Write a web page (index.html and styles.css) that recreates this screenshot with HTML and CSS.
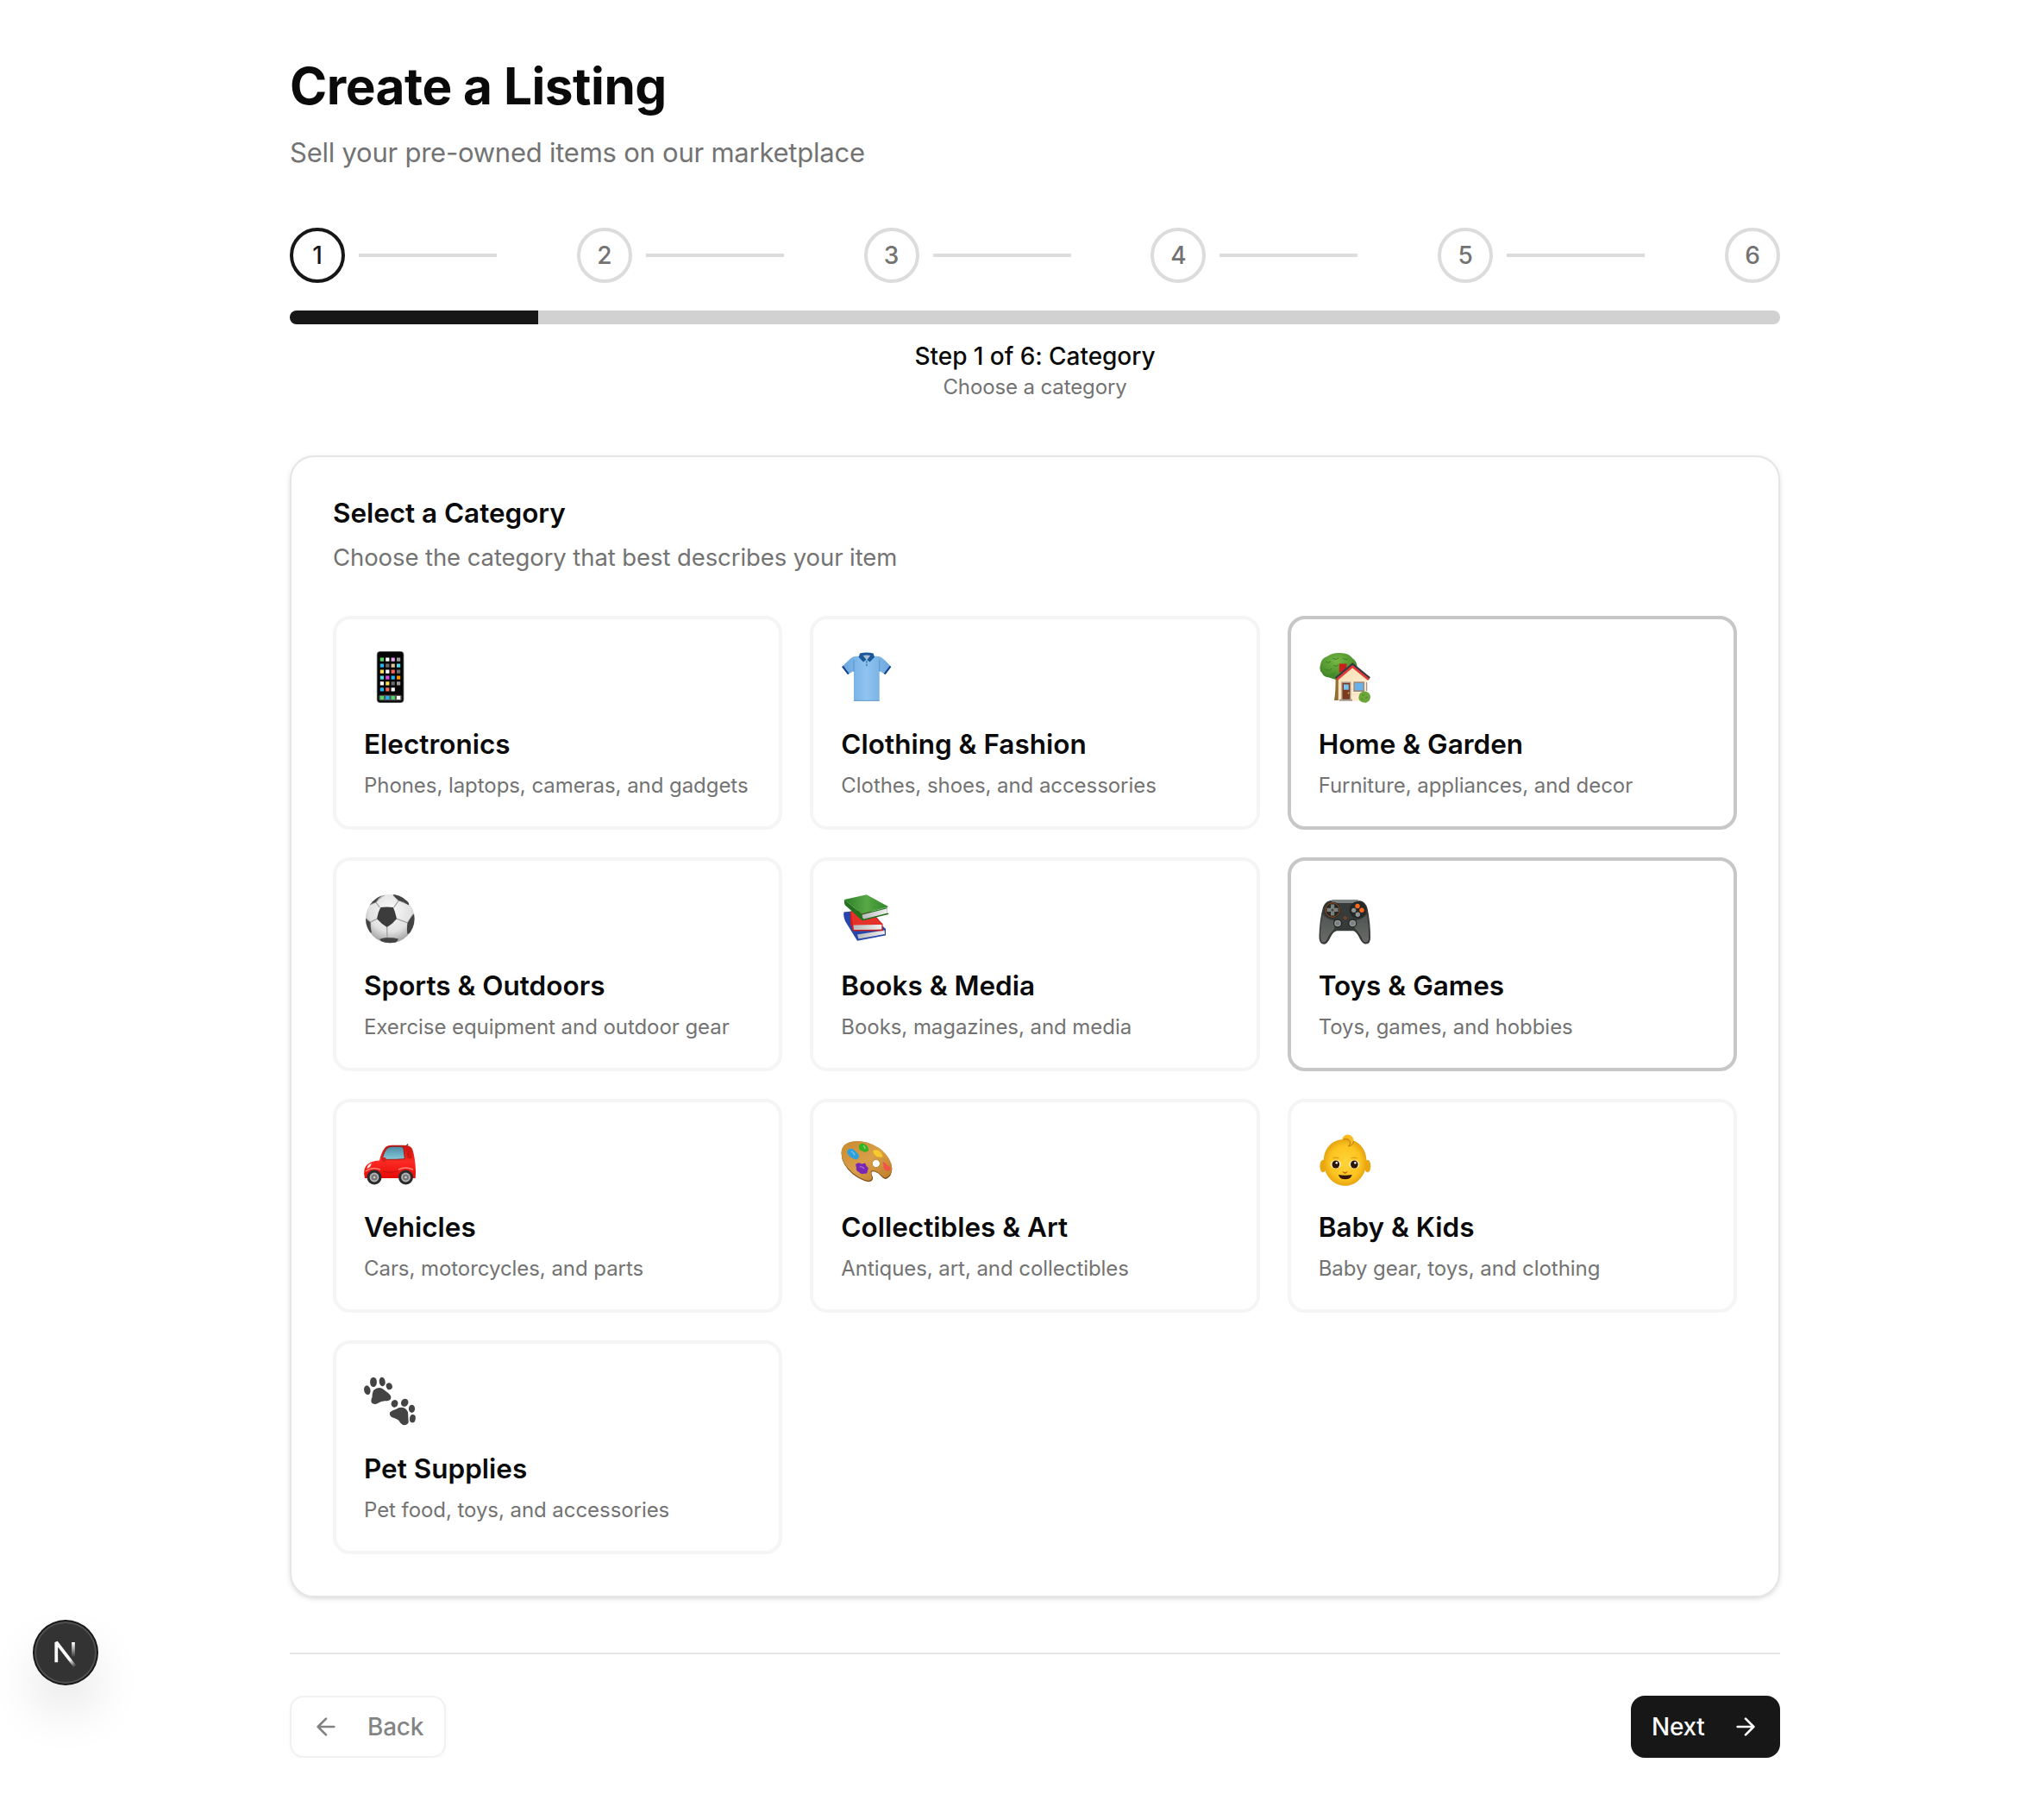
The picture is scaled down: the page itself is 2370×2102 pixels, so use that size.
FILE: index.html
```html
<!DOCTYPE html>
<html lang="en">
<head>
<meta charset="utf-8">
<title>Create a Listing</title>
<link rel="stylesheet" href="styles.css">
</head>
<body>
<main class="page">
  <header class="header">
    <h1 class="title">Create a Listing</h1>
    <p class="subtitle">Sell your pre-owned items on our marketplace</p>
  </header>

  <section class="progress">
    <ol class="steps">
      <li class="step step-active"><span class="dot">1</span><span class="line"></span></li>
      <li class="step"><span class="dot">2</span><span class="line"></span></li>
      <li class="step"><span class="dot">3</span><span class="line"></span></li>
      <li class="step"><span class="dot">4</span><span class="line"></span></li>
      <li class="step"><span class="dot">5</span><span class="line"></span></li>
      <li class="step"><span class="dot">6</span></li>
    </ol>
    <div class="track"><div class="fill"></div></div>
    <div class="caption">
      <p class="caption-title">Step 1 of 6: Category</p>
      <p class="caption-text">Choose a category</p>
    </div>
  </section>

  <section class="card">
    <h2 class="card-title">Select a Category</h2>
    <p class="card-text">Choose the category that best describes your item</p>
    <div class="grid">
      <button class="tile">
        <svg class="emoji" viewBox="0 0 60 60">
          <rect x="14.8" y="0" width="31.6" height="60" rx="4" fill="#777"/>
          <rect x="15.6" y=".8" width="30" height="58.4" rx="3.4" fill="#050505"/>
          <rect x="17.3" y="50.7" width="26.4" height="6.6" rx="1.6" fill="#555"/>
          <g>
            <path fill="#4cd964" d="M18.8 7.6h4.2v4.2h-4.2zM18.8 51.9h4.2v4.2h-4.2zM31.6 51.9h4.2v4.2h-4.2z"/>
            <path fill="#fff" d="M25.2 7.6h4.2v4.2h-4.2zM25.2 21.6h4.2v4.2h-4.2zM18.8 35.3h4.2v4.2h-4.2zM31.6 42.2h4.2v4.2h-4.2zM38 51.9h4.2v4.2h-4.2z"/>
            <path fill="#e9a6f5" d="M31.6 7.6h4.2v4.2h-4.2z"/>
            <path fill="#999" d="M38 7.6h4.2v4.2H38zM38 35.3h4.2v4.2H38z"/>
            <path fill="#1fb4f7" d="M18.8 14.6h4.2v4.2h-4.2zM31.6 28.5h4.2v4.2h-4.2zM18.8 42.2h4.2v4.2h-4.2zM25.2 51.9h4.2v4.2h-4.2z"/>
            <path fill="#6b6b6b" d="M25.2 14.6h4.2v4.2h-4.2zM38 21.6h4.2v4.2H38zM31.6 35.3h4.2v4.2h-4.2z"/>
            <path fill="#e2c39b" d="M31.6 14.6h4.2v4.2h-4.2z"/>
            <path fill="#53d8ee" d="M38 14.6h4.2v4.2H38zM18.8 28.5h4.2v4.2h-4.2z"/>
            <path fill="#fbe04a" d="M18.8 21.6h4.2v4.2h-4.2zM25.2 35.3h4.2v4.2h-4.2z"/>
            <path fill="#f9655b" d="M31.6 21.6h4.2v4.2h-4.2zM25.2 42.2h4.2v4.2h-4.2z"/>
            <path fill="#e44be3" d="M25.2 28.5h4.2v4.2h-4.2z"/>
            <path fill="#ff9500" d="M38 28.5h4.2v4.2H38z"/>
          </g>
        </svg>
        <span class="tile-title">Electronics</span>
        <span class="tile-text">Phones, laptops, cameras, and gadgets</span>
      </button>

      <button class="tile">
        <svg class="emoji" viewBox="0 0 60 60">
          <defs>
            <linearGradient id="shirt" x1="0" x2="1"><stop offset="0" stop-color="#68a4dc"/><stop offset=".5" stop-color="#8fc4f0"/><stop offset="1" stop-color="#6ba6dc"/></linearGradient>
          </defs>
          <path d="M21 5.500L14 6.500Q10 9 1.200 18.200L8 27L15 23V57.300H44.700V23L51.500 27L58.200 18.200Q50 8.500 45 6.300L38.500 5.500Z" fill="url(#shirt)"/>
          <path d="M15 10V24M44.700 10V24" stroke="#4f8cc9" stroke-width=".8"/>
          <path d="M15 57.400H44.700" stroke="#4a87c4" stroke-width=".8"/>
          <path d="M1.200 18.200L8 27l1.600-1L2.600 16.800zM58.200 18.200L51.500 27l-1.700-1 7-9.200z" fill="#123f8c"/>
          <path d="M22 2.500Q30 .3 37.600 2.500L39 7L33.500 12.500L29.800 9.500L26 12.500L20.700 7Z" fill="#1c5799"/>
          <path d="M25.600 5Q30 3.800 34.200 5L30 10.600Z" fill="#a7bfd6"/>
          <path d="M29 10h1.800v7.500H29z" fill="#6fa9de"/>
          <circle cx="29.900" cy="12.500" r=".8" fill="#2f5e94"/><circle cx="29.900" cy="16" r=".8" fill="#2f5e94"/>
        </svg>
        <span class="tile-title">Clothing &amp; Fashion</span>
        <span class="tile-text">Clothes, shoes, and accessories</span>
      </button>

      <button class="tile tile-strong">
        <svg class="emoji" viewBox="0 0 60 60">
          <defs>
            <radialGradient id="leaf" cx=".45" cy=".3" r=".7"><stop offset="0" stop-color="#76b944"/><stop offset="1" stop-color="#3c8023"/></radialGradient>
            <linearGradient id="wall" x1="0" y1="0" x2="1" y2="1"><stop offset="0" stop-color="#f6dfb4"/><stop offset="1" stop-color="#fff0d4"/></linearGradient>
          </defs>
          <path d="M19.5 28H24V57H18Q20 45 19.5 28Z" fill="#937032"/>
          <path d="M10 6Q16 1.5 25 2Q35 2 39 8Q45 12 44.5 19L38 28L20 33Q16 31.500 12 30.500Q6 30 4 25.500Q0 22 2 16Q3 8 10 6Z" fill="url(#leaf)"/>
          <path d="M8 12q3 3 6 0M16 8q4 3 7 0M8 21q4 3 7-1M17 16q3 3 6 0M28 8q3 3 6 1M14 27q3 1 5-2" fill="none" stroke="#3c8023" stroke-width="1"/>
          <path d="M23.800 14.500h8.600v10h-8.600z" fill="#c8201f"/>
          <path d="M22.800 30L39.200 17L56.300 30V57.700H22.800Z" fill="url(#wall)"/>
          <path d="M24 38h31M24 44h31M24 50h31" stroke="#ead3a8" stroke-width=".5"/>
          <path d="M20 31.500L39.200 15.200L59 31.500" fill="none" stroke="#333a47" stroke-width="3"/>
          <path d="M21 33L39.200 17.700L58 33" fill="none" stroke="#e43a35" stroke-width="2.600"/>
          <path d="M26.300 35.500h11.100v21H26.300z" fill="#a5948a"/>
          <path d="M27.600 37h8.500v19.300h-8.500z" fill="#7c3a20"/>
          <path d="M29 38.500h5.800v6.200H29z" fill="#7cc0ee"/>
          <circle cx="34.500" cy="48.500" r=".9" fill="#e6b43c"/>
          <path d="M24 55.700h15v2H24z" fill="#a09a90"/>
          <path d="M40.300 35.300h12.800V47H40.300z" fill="#9b8b80"/><path d="M41.800 37h9.800v8.300h-9.800z" fill="#68b0e8"/>
          <path d="M55.700 36v10" stroke="#8c8077" stroke-width="1"/>
          <path d="M47 51Q48 47 53 46.500Q59 47 60 52.500Q60 58 55 59.700Q50 60 47 56.500Q45.500 54 47 51Z" fill="#6ca73a"/>
          <path d="M50 50.500q2 1.500 3 0M54 54q2 1 3-1M49 55q2 1 3 0" fill="none" stroke="#4a8427" stroke-width=".8"/>
        </svg>
        <span class="tile-title">Home &amp; Garden</span>
        <span class="tile-text">Furniture, appliances, and decor</span>
      </button>

      <button class="tile">
        <svg class="emoji" viewBox="0 0 60 60">
          <defs>
            <radialGradient id="ball" cx=".5" cy=".35" r=".65"><stop offset="0" stop-color="#fafafa"/><stop offset=".65" stop-color="#e2e2e2"/><stop offset="1" stop-color="#a0a0a0"/></radialGradient>
            <clipPath id="ballclip"><circle cx="30.300" cy="30" r="28.300"/></clipPath>
          </defs>
          <circle cx="30.300" cy="30" r="28.300" fill="url(#ball)"/>
          <g clip-path="url(#ballclip)">
            <path d="M18.300 17L13.700 11M34.700 17L40.300 9M38 30.300L50.700 35M26.700 40L27 52.300M15 30.300L7.300 34.300M13.700 11Q20 4 24 3M40.300 9L34 3M40.300 9L51 13.300M50.700 35L57 25M50.700 35L50.300 46M27 52.300L18.700 54M27 52.300L39.700 53.700M7.300 34.300L2.300 30M7.300 34.300L8 46M13.700 11L6.300 14.300" fill="none" stroke="#9a9a9a" stroke-width="1.200"/>
            <path d="M19.300 17Q26.500 16 34 17Q36.500 23 38 30.300Q33 36.500 26.700 40Q20 36 15 30.300Q16 23 19.300 17Z" fill="#3c3c3c"/>
            <path d="M4 15.500Q9 12 13.700 11Q16 7 21 3L12 0L0 10ZM33.500 2Q37 6.500 40.300 9Q46 10 52 14.500L52 4L36 -1ZM58.500 24Q53.500 29 50.700 35Q49.500 41 50.300 48L60 44ZM18 54Q23 52 27 52.300Q34 52 40 53.700L36 60H24ZM1 29Q4 32 7.300 34.300Q7.300 40 9 47L2 42Z" fill="#444"/>
          </g>
        </svg>
        <span class="tile-title">Sports &amp; Outdoors</span>
        <span class="tile-text">Exercise equipment and outdoor gear</span>
      </button>

      <button class="tile">
        <svg class="emoji" viewBox="0 0 60 60">
          <defs>
            <linearGradient id="green" x1="0" x2="1"><stop offset="0" stop-color="#2c7f27"/><stop offset=".5" stop-color="#57a845"/><stop offset="1" stop-color="#2f8629"/></linearGradient>
            <linearGradient id="pages" x1="0" x2="1"><stop offset="0" stop-color="#b9b9bb"/><stop offset="1" stop-color="#f0f0f0"/></linearGradient>
          </defs>
          <path d="M3.500 22.500L28 20L52 42L52 49.500L19 55.700L5 33Q2.500 27 3.500 22.500Z" fill="#2546ad"/>
          <path d="M19 48.500L50.500 43.500L51 48L20.500 53.500Z" fill="url(#pages)"/>
          <path d="M10.700 21.500L34 20L48.500 36.500V43.500L49.500 44.300L14 44.500L11 36Z" fill="#cc1f1c"/>
          <path d="M11.500 22L34 24L49 36.500L14 37.200Z" fill="#e6302a"/>
          <path d="M14.300 37.500L47.300 37V42.600L15 43Z" fill="url(#pages)"/>
          <path d="M4 8L29.700 2.300L55.300 16.300L24 24.500Z" fill="url(#green)"/>
          <path d="M4 8Q3.500 12 5 14.500L25 32.500L55.300 25V24L53.500 23.600V17L24 24.500Z" fill="#23701f"/>
          <path d="M25 25.500L53.500 18.300V23.800L26.300 30.500Q24 28 25 25.500Z" fill="url(#pages)"/>
        </svg>
        <span class="tile-title">Books &amp; Media</span>
        <span class="tile-text">Books, magazines, and media</span>
      </button>

      <button class="tile tile-strong">
        <svg class="emoji" viewBox="0 0 60 60">
          <defs>
            <linearGradient id="pad" x1="0" y1="0" x2="0" y2="1"><stop offset="0" stop-color="#4e5453"/><stop offset="1" stop-color="#6a6b66"/></linearGradient>
          </defs>
          <path d="M12 9.500L16 8.500L45 8.500L49 9.500Q54.500 11 56.500 18Q60 34 60 52Q60 60 54 59.500Q50 59 46 50Q43 45 40 44.300H21Q17 45 14 51Q10 60 6 59.700Q0 59.500 .5 50Q1 31 5 17Q7 11 12 9.500Z" fill="#363a39"/>
          <path d="M4.500 25Q10 31 17 32Q19 39 18 42Q12 48 8.500 56Q4 60 2.300 54Q1.500 40 4.500 25ZM56 25Q50 31 43.500 32Q41 39 42.500 42Q48.500 48 51.500 56Q56 60 58 54Q58.500 40 56 25Z" fill="url(#pad)"/>
          <path d="M14 9.500L17 8.200L44 8.200L48 9.500L44 12H17Z" fill="#7c8583"/>
          <circle cx="16" cy="20" r="9.500" fill="#242827"/><circle cx="45.500" cy="20" r="10" fill="#242827"/>
          <circle cx="16" cy="20" r="8.300" fill="none" stroke="#9b4e20" stroke-width="1"/>
          <path d="M14 13.500h4.200v4.300h4.300V22h-4.300v4.500H14V22H9.500v-4.200H14z" fill="#7b7f7d"/><circle cx="16" cy="20" r="1.500" fill="#444"/>
          <circle cx="45" cy="15.500" r="2.700" fill="#ff681d"/><circle cx="50" cy="20.300" r="2.700" fill="#ff681d"/>
          <circle cx="40.700" cy="20.300" r="2.600" fill="#929695"/><circle cx="45.300" cy="25.300" r="2.700" fill="#929695"/>
          <circle cx="22" cy="35.500" r="5" fill="#1f2221"/><circle cx="39.300" cy="35.500" r="5" fill="#1f2221"/>
          <circle cx="22" cy="35.500" r="3.800" fill="#969a9a"/><circle cx="39.300" cy="35.500" r="3.800" fill="#969a9a"/>
          <circle cx="22" cy="35.500" r="2.400" fill="#7a7e7e"/><circle cx="39.300" cy="35.500" r="2.400" fill="#7a7e7e"/>
          <circle cx="30.700" cy="29.300" r="1.300" fill="#4a2a1a" stroke="#c65a22" stroke-width=".8"/>
        </svg>
        <span class="tile-title">Toys &amp; Games</span>
        <span class="tile-text">Toys, games, and hobbies</span>
      </button>

      <button class="tile">
        <svg class="emoji" viewBox="0 0 60 60">
          <defs>
            <linearGradient id="car" x1="0" y1="0" x2="0" y2="1"><stop offset="0" stop-color="#c91410"/><stop offset=".5" stop-color="#fb2a22"/><stop offset="1" stop-color="#e50a05"/></linearGradient>
            <linearGradient id="glass" x1="0" y1="0" x2="0" y2="1"><stop offset="0" stop-color="#4c8ba0"/><stop offset="1" stop-color="#86c7da"/></linearGradient>
          </defs>
          <path d="M48.500 14L51.300 11.500" stroke="#444" stroke-width="1.200"/>
          <path d="M18 30.500Q20 21 24.500 15.500Q27 12.700 32 12.700H46Q54 12.700 56 17Q58.500 24 59.500 35Q60.500 43 59.700 51H1Q-.5 46 .5 41Q2 35 8 32.500Q13 30.500 18 30.500Z" fill="url(#car)"/>
          <path d="M21.300 29.300Q23 20 27 16.200Q29 14.300 33 14.300H43Q45.500 14.500 46 17L47.300 28.500Q40 29.500 21.300 29.300Z" fill="url(#glass)" stroke="#8d1613" stroke-width=".8"/>
          <path d="M49 16Q52.500 15.500 53.500 18L55.500 28H50.500Z" fill="#cf1713"/>
          <path d="M21.500 27h3.500q1.500 3-.5 5h-3z" fill="#d8201b"/>
          <path d="M2 43Q10 37 19 41M40 41Q48 37 57 41" fill="none" stroke="#ff8076" stroke-width="1.500"/>
          <path d="M3.500 40Q4 34.500 9 34L7 38Z" fill="#f7e9e7"/>
          <path d="M22 43Q30 46 39 43" fill="none" stroke="#c3120e" stroke-width="1"/>
          <circle cx="12" cy="50" r="8.500" fill="#2c2c2e"/><circle cx="48.500" cy="50" r="8.500" fill="#2c2c2e"/>
          <circle cx="12" cy="50" r="5.400" fill="#b5b5b7"/><circle cx="48.500" cy="50" r="5.400" fill="#b5b5b7"/>
          <circle cx="12" cy="50" r="3.600" fill="#77777a"/><circle cx="48.500" cy="50" r="3.600" fill="#77777a"/>
          <circle cx="12" cy="50" r="1.300" fill="#d0d0d0"/><circle cx="48.500" cy="50" r="1.300" fill="#d0d0d0"/>
        </svg>
        <span class="tile-title">Vehicles</span>
        <span class="tile-text">Cars, motorcycles, and parts</span>
      </button>

      <button class="tile">
        <svg class="emoji" viewBox="0 0 60 60">
          <defs>
            <linearGradient id="wood" x1="0" y1="0" x2="1" y2="1"><stop offset="0" stop-color="#c98a30"/><stop offset=".5" stop-color="#d99f49"/><stop offset="1" stop-color="#bd7a27"/></linearGradient>
          </defs>
          <path fill-rule="evenodd" d="M.6 22Q1 9.500 17.500 8.300Q33 8 47 18.500Q58.500 29 59.300 40.500Q59 49 52.500 52Q49.500 52 46 48Q40 42 36 43.500Q34.500 45 37 50Q37.500 55 32 55.300Q24 54 14 46.500Q.5 35 .6 22ZM36.500 34a4.300 4.300 0 1 0 8.600 0a4.300 4.300 0 1 0-8.600 0Z" fill="#7d4a16"/>
          <path fill-rule="evenodd" d="M.6 21Q1 9 17.500 8Q33 7.500 47 18Q58.500 28 59.300 39Q59 47 52.500 50.500Q49.500 50.500 46 47Q40 41 35.500 42.500Q33.500 44 36 49Q36.500 53.500 32 54Q24 53 14 45Q.5 34 .6 21ZM36.500 34a4.300 4.300 0 1 0 8.600 0a4.300 4.300 0 1 0-8.600 0Z" fill="url(#wood)"/>
          <path d="M9 17Q14 15.500 18 21Q22 24 20.500 28Q17 30.500 13 27.500Q8 25 7 20.500Z" fill="#2da0de"/>
          <path d="M21 13Q24 8.500 28.500 12Q32.500 15 32 19Q28 22 24.500 19.500Q20 18 21 13Z" fill="#35b321"/>
          <path d="M38 18.500Q43 17.500 46 21Q50 26 47.500 26.500Q42 27.500 40 24.500Q36 21 38 18.500Z" fill="#f8cb2d"/>
          <path d="M17 35Q20 32 24 34.500L28 33.500L30 37.500Q33 39 31 42Q31 46.500 27.500 45.500Q23 47 21 44Q17 42 18 39Z" fill="#7a27b3"/>
          <path d="M48.500 32Q51 32 53 35.500L57.500 38.500Q58 43 54 42.500Q50 42 49.500 38Z" fill="#f2534a"/>
          <path d="M12 20q3 1 4 4M26 13q2 2 2 4M22 38q3-1 5 2" fill="none" stroke="#fff" stroke-opacity=".45" stroke-width="1.200"/>
        </svg>
        <span class="tile-title">Collectibles &amp; Art</span>
        <span class="tile-text">Antiques, art, and collectibles</span>
      </button>

      <button class="tile">
        <svg class="emoji" viewBox="0 0 60 60">
          <defs>
            <radialGradient id="face" cx=".5" cy=".5" r=".55"><stop offset="0" stop-color="#ffd43b"/><stop offset=".65" stop-color="#fdc41f"/><stop offset="1" stop-color="#e09a0c"/></radialGradient>
          </defs>
          <ellipse cx="5" cy="37" rx="3.600" ry="7.300" fill="#eba711"/><ellipse cx="56.700" cy="37" rx="3.600" ry="7.300" fill="#eba711"/>
          <path d="M30.700 5.700C46 5.700 55.400 17 55.400 31C55.400 48 44 59.800 30.700 59.800C17 59.800 5.700 48 5.700 31C5.700 17 15 5.700 30.700 5.700Z" fill="url(#face)"/>
          <path d="M27.500 5Q29 .5 34 .5Q40.500 1.500 40.700 8Q40 12.500 35 14Q38 10 35.500 7Q32 4 27.500 7Z" fill="#f9bb20"/>
          <path d="M40.500 8Q40 13 34.500 14Q38.500 10 35 6.500Q32 4.500 28.500 6" fill="none" stroke="#b97808" stroke-width="1"/>
          <ellipse cx="19.800" cy="35" rx="6" ry="5" fill="#f7eec4"/><ellipse cx="41.300" cy="35" rx="6" ry="5" fill="#f7eec4"/>
          <ellipse cx="19.800" cy="35" rx="4.300" ry="4.600" fill="#2d1607"/><ellipse cx="41.300" cy="35" rx="4.300" ry="4.600" fill="#2d1607"/>
          <circle cx="20.800" cy="33.300" r="1.200" fill="#fff"/><circle cx="42.300" cy="33.300" r="1.200" fill="#fff"/>
          <path d="M16.500 27.800q3.500-1.500 7 0M37.500 27.800q3.500-1.500 7 0" fill="none" stroke="#d4930c" stroke-width="1"/>
          <path d="M27.500 42.500Q30.500 45.500 33.500 42.500Q33 45.500 30.500 45.700Q28 45.500 27.500 42.500Z" fill="#b8670b"/>
          <path d="M23 47Q30.500 48.500 38.700 47Q37.500 52.300 30.700 52.300Q24 52.300 23 47Z" fill="#34160b"/>
        </svg>
        <span class="tile-title">Baby &amp; Kids</span>
        <span class="tile-text">Baby gear, toys, and clothing</span>
      </button>

      <button class="tile">
        <svg class="emoji" viewBox="0 0 60 60" fill="#444">
          <ellipse cx="3.800" cy="16.700" rx="3.700" ry="5.400" transform="rotate(-12 3.800 16.700)"/>
          <ellipse cx="11" cy="7.400" rx="3.900" ry="5.700"/>
          <ellipse cx="21.200" cy="7" rx="3.500" ry="5.300" transform="rotate(-8 21.200 7)"/>
          <ellipse cx="29.300" cy="12.200" rx="3.500" ry="4" transform="rotate(-20 29.300 12.200)"/>
          <path d="M11 17Q16 12.500 21.500 15Q24 17 28 20Q32.500 23.500 31 27Q29.500 29.500 24 29.300Q20 29.500 16 32Q12 34 9 31.500Q7.500 28.500 9.500 25Q9.500 20 11 17Z"/>
          <ellipse cx="35.500" cy="32.300" rx="3.900" ry="4.400" transform="rotate(20 35.500 32.300)"/>
          <ellipse cx="47.200" cy="31.300" rx="4.100" ry="4.700" transform="rotate(30 47.200 31.300)"/>
          <ellipse cx="55.500" cy="38.300" rx="3.600" ry="4.600"/>
          <ellipse cx="56.400" cy="49.700" rx="3.400" ry="4.700" transform="rotate(8 56.400 49.700)"/>
          <path d="M30.500 42Q33 40 37 39Q42 35.500 47 37.500Q52 40.500 51.200 46L51.700 54Q50.500 57.800 45 57Q42 55 40 51.500Q37.500 49.500 32 48Q28.500 45 30.500 42Z"/>
        </svg>
        <span class="tile-title">Pet Supplies</span>
        <span class="tile-text">Pet food, toys, and accessories</span>
      </button>
    </div>
  </section>

  <footer class="footer">
    <button class="btn btn-back" disabled>
      <svg class="icon" viewBox="0 0 24 24"><path d="m12 19-7-7 7-7M19 12H5"/></svg>
      <span>Back</span>
    </button>
    <button class="btn btn-next">
      <span>Next</span>
      <svg class="icon" viewBox="0 0 24 24"><path d="M5 12h14M12 5l7 7-7 7"/></svg>
    </button>
  </footer>
</main>

<div class="badge">
  <svg class="badge-logo" viewBox="0 0 40 40" fill="none">
    <defs>
      <linearGradient id="n0" x1="9.955" y1="11.123" x2="15.479" y2="17.967" gradientUnits="userSpaceOnUse"><stop stop-color="#fff"/><stop offset=".604" stop-color="#fff" stop-opacity="0"/></linearGradient>
      <linearGradient id="n1" x1="11.822" y1="1.400" x2="11.793" y2="9.625" gradientUnits="userSpaceOnUse"><stop stop-color="#fff"/><stop offset="1" stop-color="#fff" stop-opacity="0"/></linearGradient>
    </defs>
    <g transform="translate(12.300 13)" stroke-width="1.860">
      <path d="M13.300 15.200L2.340 1V12.600" stroke="url(#n0)" stroke-linejoin="bevel"/>
      <path d="M12.200 1V13.100" stroke="url(#n1)"/>
    </g>
  </svg>
</div>
</body>
</html>
```
FILE: styles.css
```css
* { box-sizing: border-box; margin: 0; padding: 0; }

body {
  background: #fff;
  color: #0a0a0a;
  font-family: Inter, "Liberation Sans", sans-serif;
}

button { font: inherit; color: inherit; }

.page { width: 1728px; margin: 0 306px 0 336px; padding-top: 64px; }

.header { display: flex; flex-direction: column; gap: 17px; margin-bottom: 63px; }
.title { font-size: 58.5px; line-height: 72px; font-weight: 700; letter-spacing: -.5px; }
.subtitle { font-size: 31px; line-height: 48px; letter-spacing: -.24px; color: #737373; }

.steps { display: flex; justify-content: space-between; list-style: none; margin-bottom: 32px; }
.step { display: flex; align-items: center; color: #737373; }
.dot {
  width: 64px; height: 64px;
  display: flex; align-items: center; justify-content: center;
  border: 4px solid #dcdcdc; border-radius: 50%;
  font-size: 28px; font-weight: 500;
}
.step-active .dot { border-color: #171717; color: #171717; }
.line { width: 160px; height: 4px; margin-left: 16px; background: #dcdcdc; }

.track { height: 16px; border-radius: 8px; background: #d1d1d1; overflow: hidden; margin-bottom: 16px; }
.fill { width: 16.667%; height: 100%; background: #171717; }

.caption { text-align: center; padding-top: 1px; margin-bottom: 63px; }
.caption-title { font-size: 28px; line-height: 40px; font-weight: 500; letter-spacing: -.05px; }
.caption-text { font-size: 24px; line-height: 32px; letter-spacing: -.12px; color: #737373; }

.card {
  padding: 49px 48px 48px;
  border: 2px solid #e5e5e5; border-radius: 28px;
  box-shadow: 0 2px 6px rgba(0, 0, 0, .1), 0 2px 4px -2px rgba(0, 0, 0, .1);
}
.card-title { font-size: 31.5px; line-height: 32px; font-weight: 600; letter-spacing: -.05px; margin-bottom: 15px; }
.card-text { font-size: 27.5px; line-height: 40px; letter-spacing: -.09px; color: #737373; margin-bottom: 48px; }

.grid { display: grid; grid-template-columns: repeat(3, 1fr); gap: 32px; }
.tile {
  height: 248px; padding: 32px;
  display: flex; flex-direction: column; align-items: flex-start;
  border: 4px solid #f5f5f5; border-radius: 20px;
  background: #fff; text-align: left; white-space: nowrap;
}
.tile-strong { border-color: #c7c7c7; }
.emoji { width: 60px; height: 60px; margin: 5px 0 24px; overflow: visible; }
.tile-title { font-size: 31.5px; line-height: 48px; font-weight: 600; margin-bottom: 8px; }
.tile-text { font-size: 24px; line-height: 32px; letter-spacing: -.06px; color: #737373; }

.footer {
  display: flex; justify-content: space-between;
  margin-top: 64px; padding-top: 48px; border-top: 2px solid #e5e5e5;
}
.btn {
  height: 72px; padding: 0 24px;
  display: flex; align-items: center; justify-content: space-between;
  border: 0; border-radius: 16px;
  font-size: 28px; font-weight: 500; letter-spacing: -.3px;
}
.btn-back { width: 181px; border: 2px solid #e5e5e5; background: #fff; box-shadow: 0 2px 4px rgba(0, 0, 0, .05); opacity: .5; }
.btn-next { width: 173px; background: #171717; color: #fafafa; }
.icon { width: 32px; height: 32px; fill: none; stroke: currentColor; stroke-width: 2; stroke-linecap: round; stroke-linejoin: round; }

.badge {
  position: fixed; left: 40px; top: 1880px;
  width: 72px; height: 72px; border-radius: 50%;
  display: flex; align-items: center; justify-content: center;
  background: #333;
  box-shadow: 0 0 0 2px #171717, inset 0 0 0 2px rgba(255, 255, 255, .14), 0 32px 64px -12px rgba(0, 0, 0, .24);
}
.badge-logo { width: 80px; height: 80px; flex: none; }
```
